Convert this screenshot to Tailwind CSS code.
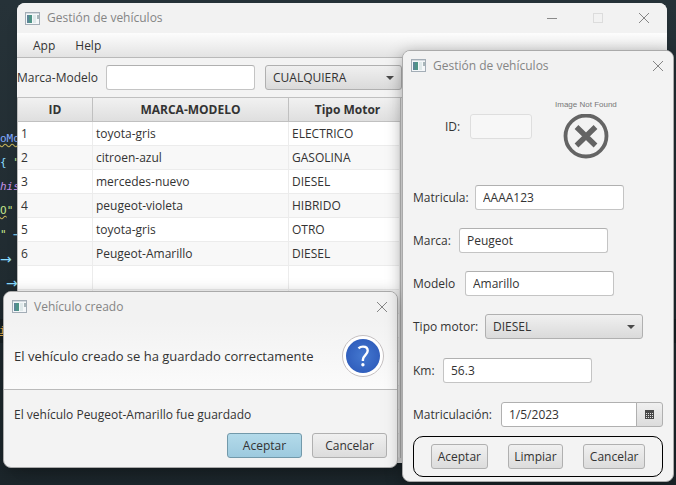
<!DOCTYPE html>
<html lang="es">
<head>
<meta charset="utf-8">
<meta name="viewport" content="width=device-width, initial-scale=1">
<title>Gestión de vehículos</title>
<script src="https://cdn.jsdelivr.net/npm/@tailwindcss/browser@4"></script>
</head>
<body class="relative h-screen overflow-hidden bg-gradient-to-b from-[#263238] to-[#1c262b] font-['Open_Sans','Noto_Sans',sans-serif] text-[12px] leading-4 text-[#333]">

<svg class="hidden" aria-hidden="true">
  <symbol id="app" viewBox="0 0 15 13">
    <rect x=".5" y=".5" width="14" height="12" fill="#f4f7f9" stroke="#a3adb6"/>
    <path d="M1 1.5h13" stroke="#d5dbe0"/>
    <rect x="2" y="3" width="5" height="8" fill="#4f9487"/>
    <rect x="2" y="3" width="2" height="8" fill="#5c8597"/>
    <rect x="8" y="3" width="3" height="8" fill="#dfe9ea"/>
    <rect x="12" y="3" width="2" height="4" fill="#a9b7ba"/>
  </symbol>
  <symbol id="close" viewBox="0 0 12 12">
    <path d="M1 1l10 10M11 1L1 11" stroke="#858585" fill="none"/>
  </symbol>
</svg>

<!-- Code editor behind the windows -->
<div class="absolute inset-x-0 top-[319px] h-6 bg-[#172024]"></div>
<div class="absolute left-0 top-[127px] flex w-5 flex-col overflow-hidden whitespace-pre font-['DejaVu_Sans_Mono',monospace] text-[11px] leading-6 text-[#89ddff]">
  <span class="text-[#82aaff] underline decoration-[#c9b458] decoration-wavy">oMo</span>
  <span>{ <span class="text-[#c3e88d]">"</span></span>
  <span class="italic text-[#c792ea]">his</span>
  <span class="text-[#c3e88d]"><span class="underline decoration-[#c9b458] decoration-wavy">O</span>"</span>
  <span><span class="text-[#c3e88d]">"</span> →</span>
  <span class="font-['DejaVu_Sans',sans-serif] text-[14px]">→</span>
  <span class="pl-1.5 font-['DejaVu_Sans',sans-serif] text-[14px]">→</span>
  <span> </span>
  <span class="-ml-px text-[#f0b450] underline">i</span>
</div>

<!-- Main window -->
<main class="absolute bottom-[22px] left-[17px] right-[9px] top-[3px] flex flex-col overflow-hidden rounded-lg bg-[#f3f3f3] shadow-lg">
  <header class="flex h-[30px] shrink-0 items-center bg-[#f2f2f2] pl-2 pr-[17px] text-[#858585]">
    <svg class="h-[13px] w-[15px]"><use href="#app"/></svg>
    <h1 class="ml-[7px] flex-1">Gestión de vehículos</h1>
    <div class="flex items-center gap-[34px]">
      <button aria-label="Minimizar"><svg class="block h-3 w-3" viewBox="0 0 12 12"><path d="M1 6.5h10" stroke="#8a8a8a"/></svg></button>
      <button aria-label="Maximizar" disabled><svg class="block h-3 w-3" viewBox="0 0 12 12"><rect x="1.500" y="1.500" width="9" height="9" fill="none" stroke="#dcdcdc"/></svg></button>
      <button aria-label="Cerrar"><svg class="block h-3 w-3"><use href="#close"/></svg></button>
    </div>
  </header>
  <nav class="flex h-[25px] shrink-0 items-center gap-5 border-b border-[#b9b9b9] bg-gradient-to-b from-[#fdfdfd] to-[#e3e3e3] pl-4 pt-0.5">
    <button>App</button>
    <button>Help</button>
  </nav>
  <div class="flex h-[39px] shrink-0 items-center">
    <label for="busca" class="w-[89px]">Marca-Modelo</label>
    <input id="busca" class="h-[25px] w-[149px] rounded-[3px] border border-[#c4c4c4] border-t-[#b0b0b0] bg-white px-2">
    <div class="relative ml-2.5">
      <select aria-label="Tipo de motor" class="h-[25px] w-[137px] appearance-none rounded-[3px] border border-[#b0b0b0] bg-gradient-to-b from-[#f0f0f0] to-[#dadada] px-[7px]"><option>CUALQUIERA</option></select>
      <svg class="pointer-events-none absolute right-2 top-[11px] h-1 w-2" viewBox="0 0 8 4"><path d="M0 0h8L4 4z" fill="#4a4a4a"/></svg>
    </div>
  </div>
  <div class="min-h-0 flex-1 overflow-hidden border-t border-[#c0c0c0] bg-[#e6e6e6]">
    <table class="w-96 table-fixed border-separate border-spacing-0 border-l border-r border-[#bcbcbc] bg-white">
      <colgroup><col class="w-[75px]"><col class="w-[196px]"><col></colgroup>
      <thead>
        <tr class="h-6 bg-gradient-to-b from-[#f1f1f1] to-[#dedede] [&>th]:border-b [&>th]:border-r [&>th]:border-[#c0c0c0] [&>th]:p-0">
          <th>ID</th><th>MARCA-MODELO</th><th class="border-r-0! pl-1.5!">Tipo Motor</th>
        </tr>
      </thead>
      <tbody class="[&_td]:border-b [&_td]:border-r [&_td]:border-[#ececec] [&_td]:py-0 [&_td]:pl-[3px] [&_td]:pr-0 [&>tr]:h-6 [&>tr:nth-child(even)]:bg-[#f8f8f8]">
        <tr><td>1</td><td>toyota-gris</td><td>ELECTRICO</td></tr>
        <tr><td>2</td><td>citroen-azul</td><td>GASOLINA</td></tr>
        <tr><td>3</td><td>mercedes-nuevo</td><td>DIESEL</td></tr>
        <tr><td>4</td><td>peugeot-violeta</td><td>HIBRIDO</td></tr>
        <tr><td>5</td><td>toyota-gris</td><td>OTRO</td></tr>
        <tr><td>6</td><td>Peugeot-Amarillo</td><td>DIESEL</td></tr>
        <tr><td></td><td></td><td></td></tr>
        <tr><td></td><td></td><td></td></tr>
        <tr><td></td><td></td><td></td></tr>
        <tr><td></td><td></td><td></td></tr>
        <tr><td></td><td></td><td></td></tr>
        <tr><td></td><td></td><td></td></tr>
        <tr><td></td><td></td><td></td></tr>
        <tr><td></td><td></td><td></td></tr>
      </tbody>
    </table>
  </div>
</main>

<!-- Confirmation dialog -->
<section role="dialog" aria-labelledby="dlg-title" class="absolute left-[3px] top-[291px] flex w-[395px] flex-col overflow-hidden rounded-lg border border-[#aaa] bg-[#f3f3f3] shadow-[0_4px_16px_rgba(0,0,0,0.3)]">
  <header class="flex h-[29px] items-center bg-[#f2f2f2] pl-2 pr-[9px] text-[#858585]">
    <svg class="h-[13px] w-[15px]"><use href="#app"/></svg>
    <h2 id="dlg-title" class="ml-[7px] flex-1">Vehículo creado</h2>
    <button aria-label="Cerrar"><svg class="block h-3 w-3"><use href="#close"/></svg></button>
  </header>
  <div class="flex h-[69px] items-center justify-between border-b border-[#bbb] bg-gradient-to-b from-[#f2f2f2] to-[#fbfbfb] pl-2.5 pr-[13px] pt-0.5">
    <p class="text-[13px] leading-5">El vehículo creado se ha guardado correctamente</p>
    <svg class="h-[42px] w-[42px]" viewBox="0 0 42 42" aria-hidden="true">
      <defs><radialGradient id="blue"><stop offset="0" stop-color="#4478d0"/><stop offset="1" stop-color="#315fbd"/></radialGradient></defs>
      <circle cx="21" cy="21" r="20.500" fill="#fff" stroke="#c4bfc0"/>
      <circle cx="21" cy="21" r="17" fill="url(#blue)"/>
      <path d="M16.500 13.400C17.700 12.200 19.200 11.600 21 11.600C24 11.600 25.700 13.200 25.700 15.700C25.700 19.800 20.900 20.300 20.900 24.700V26" fill="none" stroke="#fff" stroke-width="2.400"/>
      <circle cx="20.900" cy="29.800" r="1.700" fill="#fff"/>
    </svg>
  </div>
  <p class="mt-[17px] pl-2.5">El vehículo Peugeot-Amarillo fue guardado</p>
  <div class="mb-[9px] mt-2.5 flex justify-end gap-2.5 pr-2.5">
    <button class="h-[25px] w-[75px] rounded-[3px] border border-[#7299aa] bg-gradient-to-b from-[#b3daea] to-[#9dcade]">Aceptar</button>
    <button class="h-[25px] w-[75px] rounded-[3px] border border-[#b0b0b0] bg-gradient-to-b from-[#f0f0f0] to-[#dcdcdc]">Cancelar</button>
  </div>
</section>

<!-- Vehicle form window -->
<section role="dialog" aria-labelledby="form-title" class="absolute right-[2px] top-[50px] flex w-[272px] flex-col overflow-hidden rounded-lg border border-[#aaa] bg-[#f3f3f3] shadow-[0_4px_16px_rgba(0,0,0,0.35)]">
  <header class="flex h-[29px] items-center bg-[#f2f2f2] pl-2 pr-[9px] text-[#858585]">
    <svg class="h-[13px] w-[15px]"><use href="#app"/></svg>
    <h2 id="form-title" class="ml-[7px] flex-1">Gestión de vehículos</h2>
    <button aria-label="Cerrar"><svg class="block h-3 w-3"><use href="#close"/></svg></button>
  </header>
  <form class="flex flex-col gap-[18px] px-2.5 pb-1">
    <div class="mt-[19px] flex h-[68px] items-start pl-8">
      <label for="id" class="mt-5 w-[25px]">ID:</label>
      <input id="id" disabled class="mt-[15px] h-[25px] w-[62px] rounded-[3px] border border-[#dedede] bg-[#f7f7f7]">
      <figure class="ml-[23px] flex flex-col items-center">
        <figcaption class="whitespace-nowrap font-['Liberation_Sans',Arial,sans-serif] text-[8px] leading-3 text-[#777]">Image Not Found</figcaption>
        <svg class="mt-[3px] h-[46px] w-[46px]" viewBox="0 0 46 46" aria-hidden="true">
          <circle cx="23" cy="22" r="20.500" fill="none" stroke="#646464" stroke-width="3.800"/>
          <path d="M13.500 13l19 18.500M32.500 13l-19 18.500" stroke="#646464" stroke-width="5.400"/>
        </svg>
      </figure>
    </div>
    <div class="flex items-center">
      <label for="matricula" class="w-[62px]">Matricula:</label>
      <input id="matricula" value="AAAA123" class="h-[25px] w-[149px] rounded-[3px] border border-[#c4c4c4] border-t-[#b0b0b0] bg-white px-[7px]">
    </div>
    <div class="flex items-center">
      <label for="marca" class="w-[46px]">Marca:</label>
      <input id="marca" value="Peugeot" class="h-[25px] w-[149px] rounded-[3px] border border-[#c4c4c4] border-t-[#b0b0b0] bg-white px-[7px]">
    </div>
    <div class="flex items-center">
      <label for="modelo" class="w-[52px]">Modelo</label>
      <input id="modelo" value="Amarillo" class="h-[25px] w-[149px] rounded-[3px] border border-[#c4c4c4] border-t-[#b0b0b0] bg-white px-[7px]">
    </div>
    <div class="flex items-center">
      <label for="motor" class="w-[72px]">Tipo motor:</label>
      <div class="relative">
        <select id="motor" class="block h-[25px] w-[158px] appearance-none rounded-[3px] border border-[#b0b0b0] bg-gradient-to-b from-[#f0f0f0] to-[#dadada] px-[7px]"><option>DIESEL</option></select>
        <svg class="pointer-events-none absolute right-2 top-[11px] h-1 w-2" viewBox="0 0 8 4"><path d="M0 0h8L4 4z" fill="#4a4a4a"/></svg>
      </div>
    </div>
    <div class="mt-px flex items-center">
      <label for="km" class="w-[30px]">Km:</label>
      <input id="km" value="56.3" class="h-[25px] w-[149px] rounded-[3px] border border-[#c4c4c4] border-t-[#b0b0b0] bg-white px-[7px]">
    </div>
    <div class="mt-px flex items-center">
      <label for="fecha" class="w-[88px]">Matriculación:</label>
      <input id="fecha" value="1/5/2023" class="h-[25px] w-[136px] rounded-l-[3px] border border-[#b0b0b0] bg-white px-[7px]">
      <button type="button" aria-label="Abrir calendario" class="-ml-px flex h-[25px] w-[27px] items-center justify-center rounded-r-[3px] border border-[#b0b0b0] bg-gradient-to-b from-[#f0f0f0] to-[#dcdcdc]">
        <svg class="h-[9px] w-[9px]" viewBox="0 0 9 9"><path d="M0 0h9v9H0z" fill="#484848"/><path d="M1 3.500h7M1 5.500h7M1 7.500h7" stroke="#e0e0e0" stroke-dasharray="1 1"/></svg>
      </button>
    </div>
    <div class="-mt-[9px] flex h-[41px] items-center gap-5 rounded-[10px] border border-black px-[17px]">
      <button type="button" class="h-[25px] w-[57px] rounded-[3px] border border-[#b0b0b0] bg-gradient-to-b from-[#f0f0f0] to-[#dcdcdc]">Aceptar</button>
      <button type="button" class="h-[25px] w-14 rounded-[3px] border border-[#b0b0b0] bg-gradient-to-b from-[#f0f0f0] to-[#dcdcdc]">Limpiar</button>
      <button type="button" class="h-[25px] w-[62px] rounded-[3px] border border-[#b0b0b0] bg-gradient-to-b from-[#f0f0f0] to-[#dcdcdc]">Cancelar</button>
    </div>
  </form>
</section>
</body>
</html>
